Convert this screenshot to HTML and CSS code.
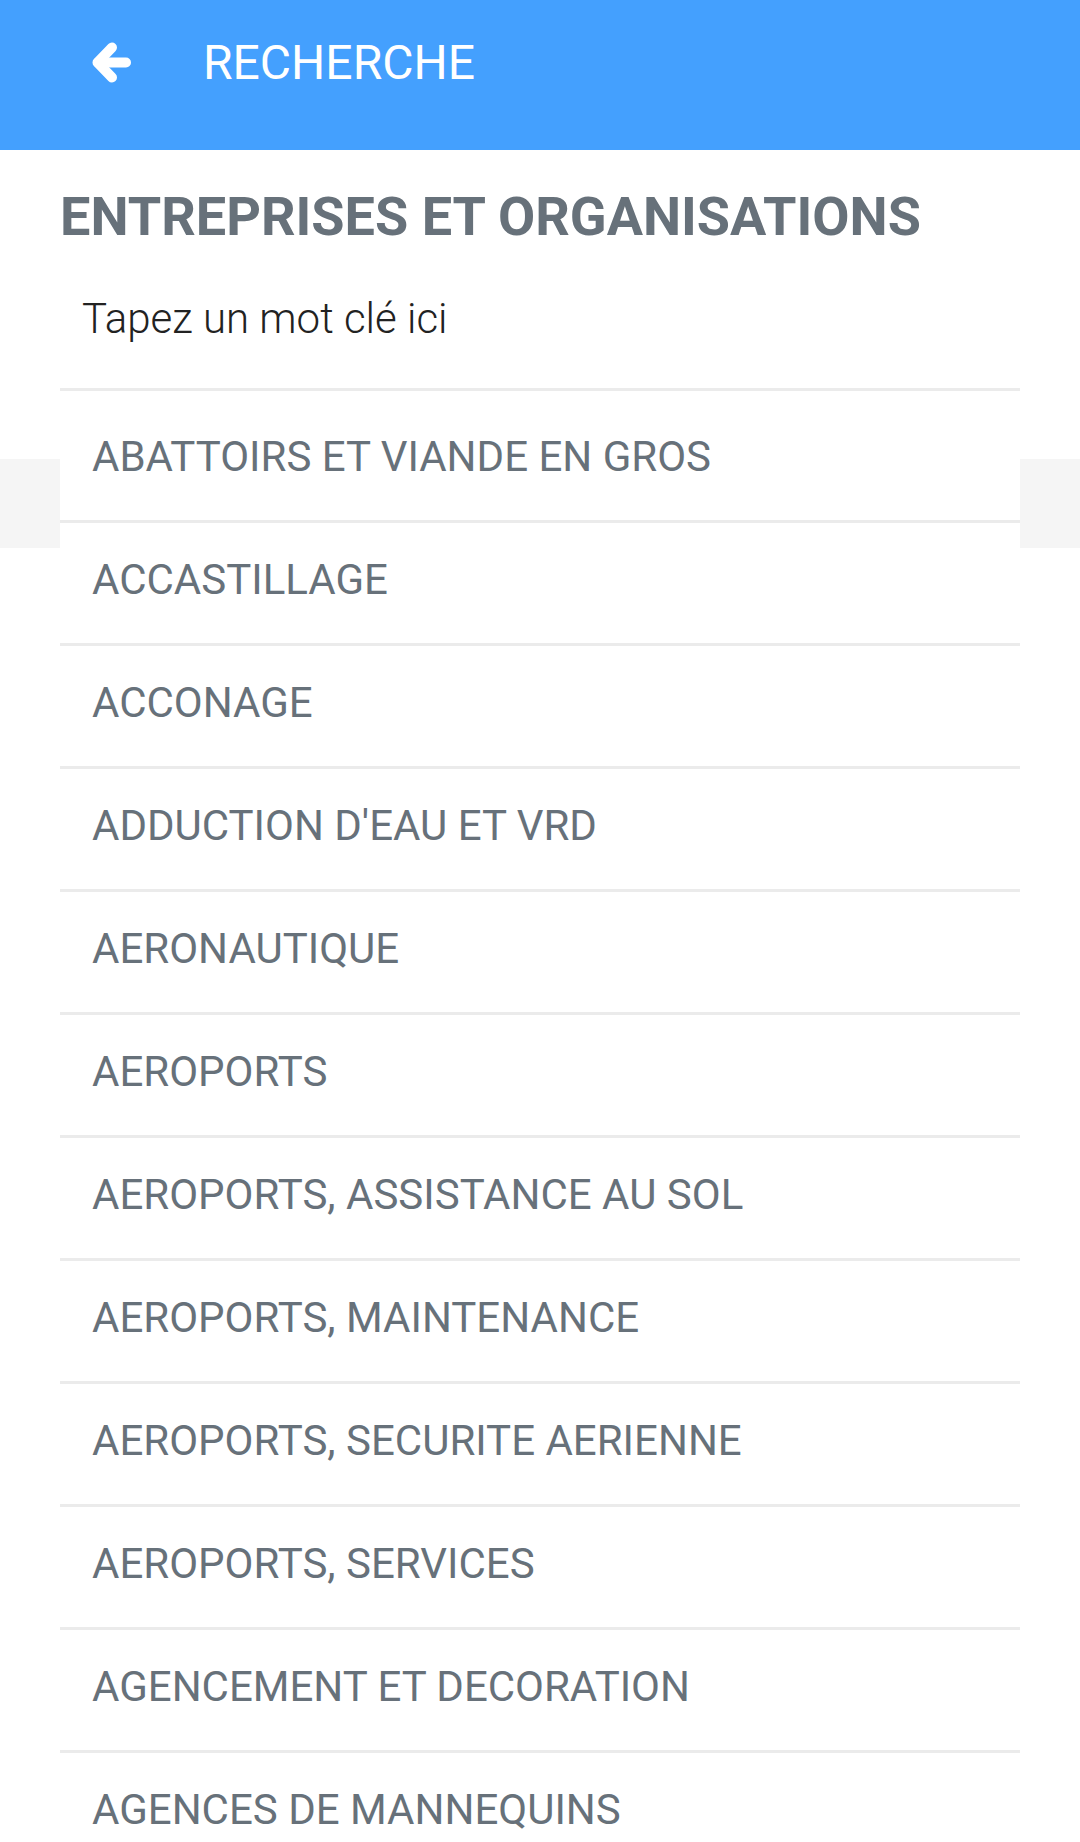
FILE: index.html
```html
<!DOCTYPE html>
<html lang="fr">
<head>
  <meta charset="UTF-8" />
  <meta name="viewport" content="width=device-width, initial-scale=1.0" />
  <title>Recherche</title>
  <link rel="stylesheet" href="styles.css">
</head>
<body>

  <header id="header">
    <a class="back" href="#">
      <svg width="40" height="41" viewBox="0 0 40 41">
        <polyline points="20,5.5 5.5,20.5 20,35.5" fill="none" stroke="#fff" stroke-width="10" stroke-linecap="round" stroke-linejoin="round" />
        <line x1="6" y1="20.5" x2="34" y2="20.5" stroke="#fff" stroke-width="10" stroke-linecap="round" />
      </svg>
    </a>
    <span class="title">RECHERCHE</span>
  </header>

  <div id="main">
    <h1>ENTREPRISES ET ORGANISATIONS</h1>

    <input class="search" type="text" placeholder="Tapez un mot clé ici" />

    <ul class="list">
      <li>ABATTOIRS ET VIANDE EN GROS</li>
      <li>ACCASTILLAGE</li>
      <li>ACCONAGE</li>
      <li>ADDUCTION D'EAU ET VRD</li>
      <li>AERONAUTIQUE</li>
      <li>AEROPORTS</li>
      <li>AEROPORTS, ASSISTANCE AU SOL</li>
      <li>AEROPORTS, MAINTENANCE</li>
      <li>AEROPORTS, SECURITE AERIENNE</li>
      <li>AEROPORTS, SERVICES</li>
      <li>AGENCEMENT ET DECORATION</li>
      <li>AGENCES DE MANNEQUINS</li>
      <li>AGENCES DE PUBLICITE</li>
    </ul>
  </div>

</body>
</html>
```

FILE: styles.css
```css
body {
  margin: 0;
  font-family: Roboto, "Liberation Sans", sans-serif;
  overflow: hidden;
  background: linear-gradient(to bottom, #fff 459px, #f5f5f5 459px, #f5f5f5 548px, #fff 548px);
}

header {
  height: 150px;
  box-sizing: border-box;
  background-color: #44a0fe;
  color: #fff;
  display: flex;
  align-items: center;
  padding: 0 0 26px 92px;
}

header .back {
  display: flex;
  width: 40px;
  height: 41px;
  margin-right: 71px;
}

header .title {
  font-size: 48px;
  font-weight: 400;
}

#main {
  margin: 0 60px;
}

h1 {
  margin: 35px 0 0;
  font-size: 54px;
  font-weight: 700;
  color: #67717a;
}

.search {
  display: block;
  width: 100%;
  height: 143px;
  box-sizing: border-box;
  margin: 0;
  padding: 0 22px;
  border: none;
  border-bottom: 3px solid #ebebeb;
  background: #fff;
  font-family: Roboto, sans-serif;
  font-size: 42px;
  font-weight: 300;
  color: #222;
  outline: none;
}

.search::placeholder {
  color: #222;
}

.list {
  list-style: none;
  margin: 0;
  padding: 9px 0 0;
  background: #fff;
}

.list li {
  height: 113px;
  line-height: 113px;
  padding: 0 0 7px 32px;
  border-bottom: 3px solid #ebebeb;
  font-size: 42px;
  color: #67717a;
  white-space: nowrap;
}
```
